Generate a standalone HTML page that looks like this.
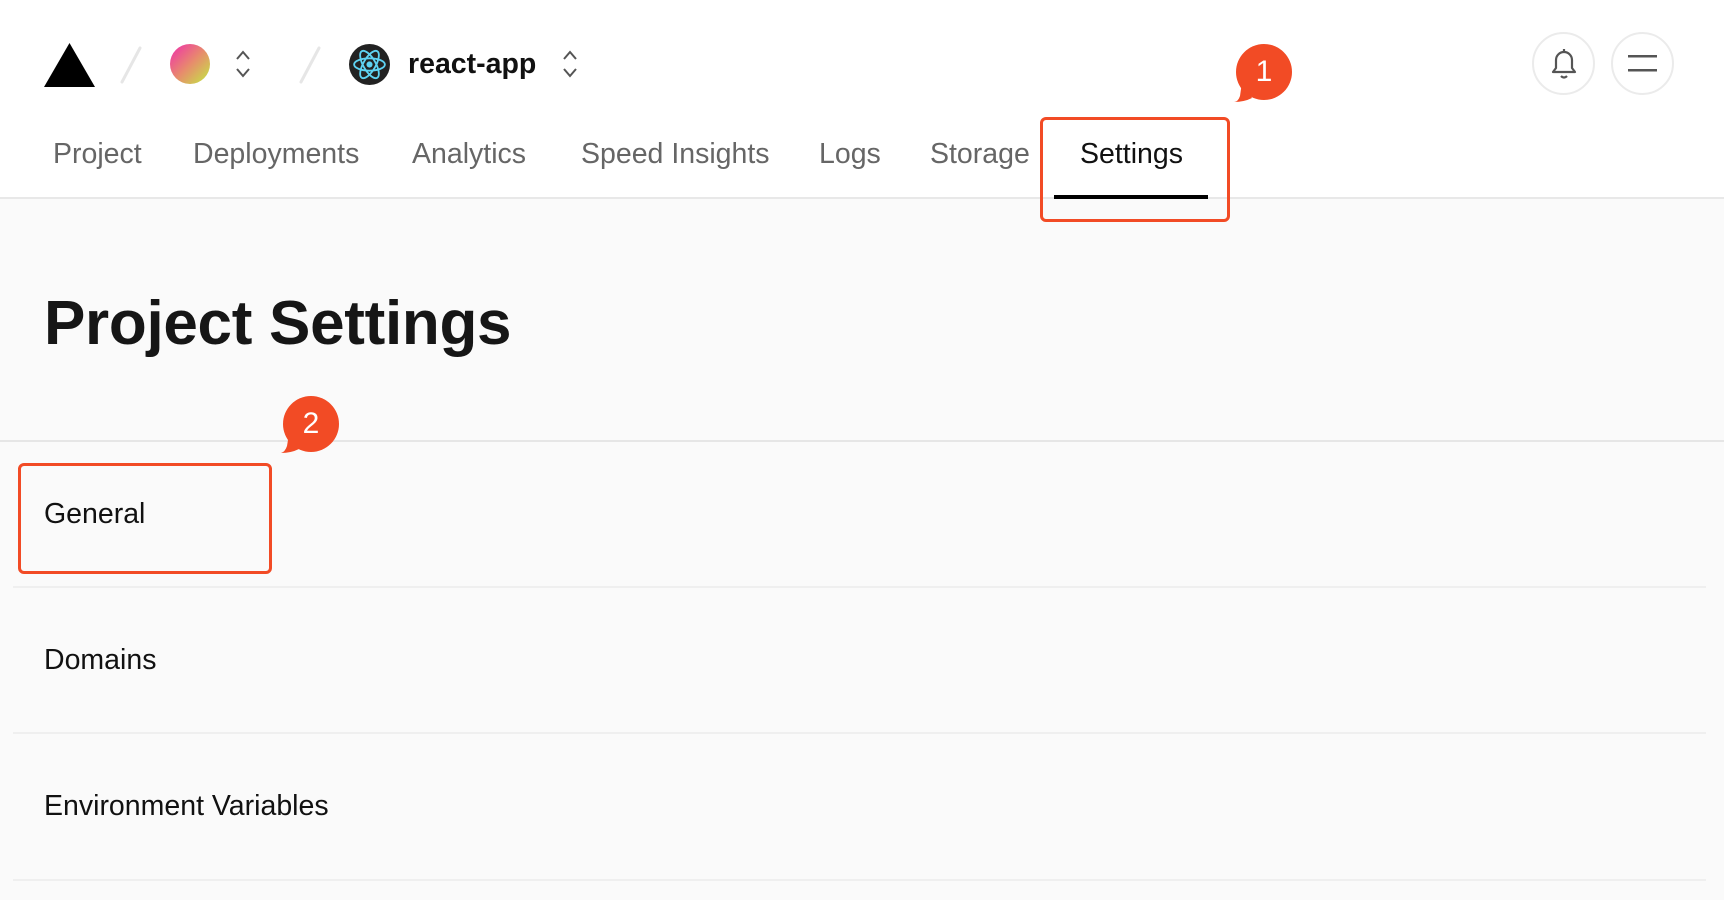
<!DOCTYPE html>
<html><head><meta charset="utf-8"><style>
*{margin:0;padding:0;box-sizing:border-box}
body{width:1724px;height:900px;overflow:hidden;background:#fafafa;font-family:"Liberation Sans",sans-serif;position:relative}
.hdr{position:absolute;left:0;top:0;width:1724px;height:199px;background:#fff;border-bottom:2px solid #e8e8e8}
.a{position:absolute}
.nav{position:absolute;top:138px;font-size:28.5px;color:#666;white-space:nowrap}
.row{position:absolute;left:44px;font-size:28.5px;color:#111}
.div{position:absolute;left:13px;width:1693px;height:2px;background:#efefef}
.badge{position:absolute;width:56px;height:56px;border-radius:50%;background:#f24b25;color:#fff;font-size:30px;text-align:center;line-height:56px}
.circ{position:absolute;width:63px;height:63px;border-radius:50%;border:2px solid #ebebeb;background:#fff}
</style></head><body>
<div class="hdr">
<svg class="a" style="left:44px;top:43px" width="51" height="44"><polygon points="25.5,0 51,44 0,44" fill="#000"/></svg>
<svg class="a" style="left:118px;top:46px" width="26" height="38"><line x1="22" y1="2" x2="4" y2="36" stroke="#e6e6e6" stroke-width="3" stroke-linecap="round"/></svg>
<div class="a" style="left:170px;top:44px;width:40px;height:40px;border-radius:50%;background:linear-gradient(135deg,#ee3fa0 10%,#e88a6d 50%,#c9d84a 90%)"></div>
<svg class="a" style="left:234px;top:49px" width="18" height="30" fill="none" stroke="#555" stroke-width="2"><polyline points="3,10 9,3 15,10"/><polyline points="3,20 9,27 15,20"/></svg>
<svg class="a" style="left:297px;top:46px" width="26" height="38"><line x1="22" y1="2" x2="4" y2="36" stroke="#e6e6e6" stroke-width="3" stroke-linecap="round"/></svg>
<svg class="a" style="left:349px;top:44px" width="41" height="41" viewBox="0 0 40 40"><circle cx="20" cy="20" r="20" fill="#222"/><g fill="none" stroke="#5ed3f3" stroke-width="1.8"><ellipse cx="20" cy="20" rx="15" ry="6"/><ellipse cx="20" cy="20" rx="15" ry="6" transform="rotate(60 20 20)"/><ellipse cx="20" cy="20" rx="15" ry="6" transform="rotate(120 20 20)"/></g><circle cx="20" cy="20" r="3" fill="#5ed3f3"/></svg>
<div class="a" style="left:408px;top:48px;font-size:28.5px;font-weight:bold;color:#111">react-app</div>
<svg class="a" style="left:561px;top:49px" width="18" height="30" fill="none" stroke="#555" stroke-width="2"><polyline points="3,10 9,3 15,10"/><polyline points="3,20 9,27 15,20"/></svg>
<div class="nav" style="left:53px">Project</div>
<div class="nav" style="left:193px">Deployments</div>
<div class="nav" style="left:412px">Analytics</div>
<div class="nav" style="left:581px">Speed Insights</div>
<div class="nav" style="left:819px">Logs</div>
<div class="nav" style="left:930px">Storage</div>
<div class="nav" style="left:1080px;color:#111">Settings</div>
<div class="a" style="left:1054px;top:195px;width:154px;height:4px;background:#000"></div>
<div class="circ" style="left:1532px;top:32px"></div>
<svg class="a" style="left:1548px;top:46px" width="32" height="36" fill="none" stroke="#555" stroke-width="2.2"><path d="M8 22 V14 a8 8 0 0 1 16 0 V22 L27 26 H5 Z" stroke-linejoin="round"/><path d="M13 30 q3 3 6 0"/><line x1="16" y1="3" x2="16" y2="6"/></svg>
<div class="circ" style="left:1611px;top:32px"></div>
<svg class="a" style="left:1627px;top:52px" width="32" height="24"><rect x="1" y="3" width="29" height="2.5" fill="#555"/><rect x="1" y="17" width="29" height="2.5" fill="#555"/></svg>
</div>
<div class="a" style="left:1040px;top:117px;width:190px;height:105px;border:3px solid #f24b25;border-radius:6px"></div>
<div class="badge" style="left:1236px;top:44px">1</div>
<svg class="a" style="left:1230px;top:82px" width="26" height="22"><path d="M12 0 L10 14 Q8 20 4 20 Q14 20 22 16 Z" fill="#f24b25"/></svg>
<div class="a" style="left:44px;top:288px;font-size:62px;font-weight:bold;color:#161616;letter-spacing:-0.3px">Project Settings</div>
<div class="a" style="left:0;top:440px;width:1724px;height:2px;background:#e6e6e6"></div>
<div class="row" style="left:44px;top:498px">General</div>
<div class="div" style="top:586px"></div>
<div class="row" style="top:644px">Domains</div>
<div class="div" style="top:732px"></div>
<div class="row" style="top:790px">Environment Variables</div>
<div class="div" style="top:879px"></div>
<div class="a" style="left:18px;top:463px;width:254px;height:111px;border:3px solid #f24b25;border-radius:6px"></div>
<div class="badge" style="left:283px;top:396px">2</div>
<svg class="a" style="left:277px;top:434px" width="26" height="22"><path d="M12 0 L10 12 Q8 18 4 19 Q14 19 22 15 Z" fill="#f24b25"/></svg>
</body></html>
